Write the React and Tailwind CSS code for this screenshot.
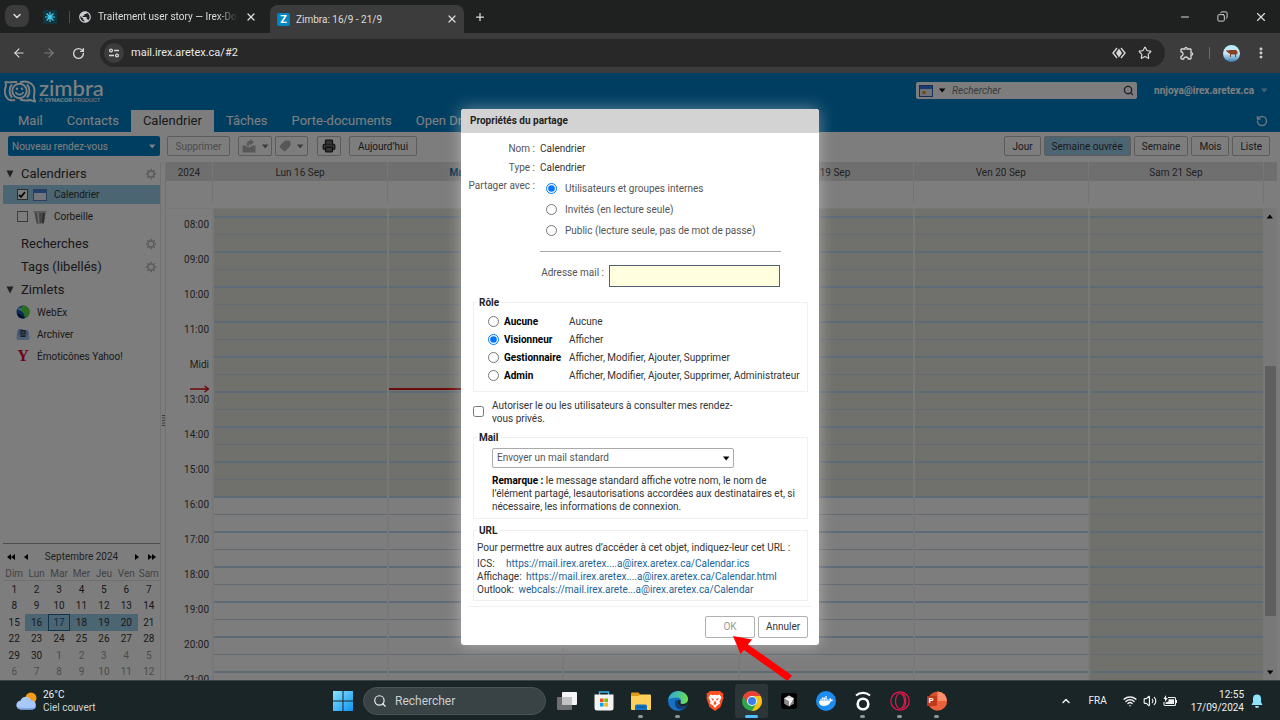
import React, { useState } from 'react';
import { ArrowLeft, ArrowRight, ChevronDown, ChevronUp, Copy, EllipsisVertical, Minus, Plus, Printer, RotateCw, Search, Star, Tag, Volume2, Wifi, X } from 'lucide-react';
import { MdOutlineExtension, MdPublic } from 'react-icons/md';
import { SiDocker } from 'react-icons/si';

const HOURS = ['08:00', '09:00', '10:00', '11:00', 'Midi', '13:00', '14:00', '15:00', '16:00', '17:00', '18:00', '19:00', '20:00', '21:00'];

// closed = number of hour rows that are outside of the working hours
const DAYS = [
  { label: 'Lun 16 Sep', closed: 8 },
  { label: 'Mar 17 Sep', closed: 8, today: true },
  { label: 'Mer 18 Sep', closed: 8 },
  { label: 'Jeu 19 Sep', closed: 8 },
  { label: 'Ven 20 Sep', closed: 8 },
  { label: 'Sam 21 Sep', closed: 14 },
];

const APP_TABS = ['Mail', 'Contacts', 'Calendrier', 'Tâches', 'Porte-documents', 'Open Drive'];
const VIEWS = ['Jour', 'Semaine ouvrée', 'Semaine', 'Mois', 'Liste'];
const WEEKDAYS = ['Dim', 'Lun', 'Mar', 'Mer', 'Jeu', 'Ven', 'Sam'];

const SHARE_WITH = [
  { id: 'internal', label: 'Utilisateurs et groupes internes' },
  { id: 'guests', label: 'Invités (en lecture seule)' },
  { id: 'public', label: 'Public (lecture seule, pas de mot de passe)' },
];

const ROLES = [
  { id: 'none', label: 'Aucune', rights: 'Aucune' },
  { id: 'viewer', label: 'Visionneur', rights: 'Afficher' },
  { id: 'manager', label: 'Gestionnaire', rights: 'Afficher, Modifier, Ajouter, Supprimer' },
  { id: 'admin', label: 'Admin', rights: 'Afficher, Modifier, Ajouter, Supprimer, Administrateur' },
];

/* ---------- Small drawings ---------- */

const Caret = ({ className = '' }) => (
  <svg viewBox="0 0 8 5" className={`w-2 h-[5px] shrink-0 ${className}`} fill="currentColor"><path d="M1 0.5h6.400L4.200 4.500z" /></svg>
);

const GearIcon = () => (
  <svg viewBox="0 0 12 12" className="size-3 text-[#b5b5b5]" fill="none" stroke="currentColor">
    <circle cx="6" cy="6" r="3" strokeWidth="1.300" />
    <path d="M6 0.800v1.700M6 9.500v1.700M0.800 6h1.700M9.500 6h1.700M2.300 2.300l1.200 1.200M8.500 8.500l1.200 1.200M9.700 2.300L8.500 3.500M3.500 8.500L2.300 9.700" strokeWidth="1.600" />
  </svg>
);

const CalendarIcon = () => (
  <svg viewBox="0 0 14 12" className="w-[14px] h-3 shrink-0">
    <rect x="0.5" y="0.5" width="13" height="11" fill="#e4ecf8" stroke="#5b7fbf" />
    <rect x="1" y="1" width="12" height="3" fill="#4a7fd6" />
  </svg>
);

const TrashIcon = () => (
  <svg viewBox="0 0 14 14" className="size-[14px] shrink-0">
    <path d="M1.5 2.5h11L11 13.5H3.5z" fill="#8d8d8d" />
    <path d="M4 3l1 10h1.5L6 3z" fill="#d0d0d0" />
    <path d="M10 3L9 13h1.6L12 3z" fill="#5e5e5e" />
    <rect x="0.5" y="1" width="13" height="2" rx="1" fill="#b5b5b5" />
  </svg>
);

const WebExIcon = () => (
  <svg viewBox="0 0 14 14" className="size-[14px]">
    <circle cx="7" cy="7" r="6.5" fill="#1b55b5" />
    <path d="M7 0.5a6.5 6.5 0 0 1 3 12.2C7 12 9 8 6 7 4 5.500 4 2 7 0.500z" fill="#56d83c" />
    <path d="M1 9c2-1 5 1 8 4-3 1.500-7 0-8-4z" fill="#06245f" />
    <ellipse cx="4" cy="4" rx="2" ry="1.500" fill="#6fd0f5" />
  </svg>
);

const ArchiveIcon = () => (
  <svg viewBox="0 0 14 14" className="size-[14px]">
    <path d="M1.500 4l1.500-2h3l1 1h4l1.500 1.500V9h-11.500z" fill="#7fa8dc" />
    <rect x="4.500" y="3" width="5" height="6.500" fill="#2b3547" />
    <path d="M5.500 4.500h3v1h-3zM5.500 6.500h1v2h-1zM7.500 6.500h1v2h-1z" fill="#a9bfdc" />
    <path d="M0.500 8.500h13l-0.500 4.500H1z" fill="#9cc0ea" />
    <path d="M4.500 8.500h5v1.500h-5z" fill="#2b3547" />
  </svg>
);

const ZimbraMark = () => (
  <svg viewBox="0 0 32 23" className="w-8 h-[23px]" fill="none" stroke="#fff" strokeWidth="1.900">
    <path d="M1.500 1.500c-0.300 2 1 3 0.300 5C0 10.500 0.500 16 4 19c2 1.600 5 1.500 7 1" />
    <path d="M1.500 1.500C4 3.500 7 1.500 13 2" />
    <path d="M16 2.500c8-3 15 2 14.500 9 0 3-1 4.500-0.500 6.500 0.200 1.500 1 2.500 1 3.500-2 0-3-1.500-5-1.500-4 1-7 0.500-10-0.500" />
    <circle cx="15.500" cy="11" r="7.200" />
    <path d="M8 4.500C4.800 8 4.800 14 8 17.500M23 4.500c3.200 3.500 3.200 9.500 0 13" />
    <path d="M11.500 12c1.500 3.500 6.500 3.500 8 0" strokeWidth="1.600" />
    <circle cx="13" cy="8.800" r="1.200" fill="#fff" stroke="none" />
    <circle cx="18" cy="8.800" r="1.200" fill="#fff" stroke="none" />
  </svg>
);

const WindowsIcon = () => (
  <svg viewBox="0 0 20 20" className="size-5">
    <defs>
      <linearGradient id="win" x1="0" y1="0" x2="1" y2="1">
        <stop offset="0" stopColor="#8be3fe" />
        <stop offset="1" stopColor="#0b93f0" />
      </linearGradient>
    </defs>
    <path d="M0 0h9.500v9.500H0zM10.500 0H20v9.500h-9.500zM0 10.500h9.500V20H0zM10.500 10.500H20V20h-9.500z" fill="url(#win)" />
  </svg>
);

const TaskViewIcon = () => (
  <svg viewBox="0 0 20 20" className="size-5">
    <rect x="0" y="6" width="15" height="13" rx="1" fill="#6d6f70" />
    <rect x="5" y="1" width="15" height="13" rx="1" fill="#f4f4f4" />
    <rect x="5" y="6" width="10" height="8" fill="#c2c3c4" />
  </svg>
);

const StoreIcon = () => (
  <svg viewBox="0 0 20 20" className="size-5">
    <path d="M5.500 5V1h9v4" fill="none" stroke="#35b5ea" strokeWidth="1.400" />
    <path d="M0.500 3.500h19V17a2.500 2.500 0 0 1-2.500 2.500H3A2.500 2.500 0 0 1 0.500 17z" fill="#f3f3f3" />
    <path d="M6 7.500h3.600v3.600H6z" fill="#f25022" />
    <path d="M10.400 7.500H14v3.600h-3.600z" fill="#7fba00" />
    <path d="M6 11.900h3.600v3.600H6z" fill="#00a4ef" />
    <path d="M10.400 11.900H14v3.600h-3.600z" fill="#ffb900" />
  </svg>
);

const FolderIcon = () => (
  <svg viewBox="0 0 20 20" className="size-5">
    <path d="M0 2.500a1 1 0 0 1 1-1h6.500l2 2.500H19v4H0z" fill="#e09b17" />
    <path d="M0 5h7.500l2-1.500H19a1 1 0 0 1 1 1V18a1 1 0 0 1-1 1H1a1 1 0 0 1-1-1z" fill="#fdd05b" />
    <path d="M4 19v-4a1.500 1.500 0 0 1 1.500-1.500h9A1.500 1.500 0 0 1 16 15v4z" fill="#1073c6" />
    <rect x="6" y="15.500" width="8" height="1" fill="#0a4c8a" />
  </svg>
);

const EdgeIcon = () => (
  <svg viewBox="0 0 20 20" className="size-5">
    <defs>
      <linearGradient id="edgeTop" x1="0" y1="0.300" x2="1" y2="0.500">
        <stop offset="0" stopColor="#2aa5e0" />
        <stop offset="1" stopColor="#6ce04f" />
      </linearGradient>
    </defs>
    <circle cx="10" cy="10" r="10" fill="#1670c4" />
    <path d="M0.200 9C1 3.500 5 0 10 0c6 0 10 4 10 8 0 3.500-2.500 5-5 5-2 0-3.300-0.800-2.500-1.800C14 9 12 6.500 9 6.500 5 6.500 1.500 7.500 0.200 9z" fill="url(#edgeTop)" />
    <path d="M7.500 9.500c-2 4 0.500 9 5.500 9 2.500-0.500 4.500-2 5.800-4-2.500 1.300-6 1-7.800-0.800C9.500 12.500 9.500 10.500 10.500 9z" fill="#123f7c" />
    <path d="M18.800 14.500c-2.500 1.300-6 1-7.800-0.800-1.500-1.200-1.500-3.200-0.500-4.700 1.500-0.500 2.700 1 2 2.200-0.800 1 0.500 1.800 2.500 1.800 2 0 4-1 5-3 0 1.500-0.300 3-1.200 4.500z" fill="#1b2628" />
  </svg>
);

const BraveIcon = () => (
  <svg viewBox="0 0 20 20" className="size-5">
    <path d="M5 0h10l1.500 1.500L18.500 2.500 18 5.500l0.700 1L15.500 16l-5.500 4-5.500-4L1.300 6.500l0.700-1L1.500 2.500 3.500 1.500z" fill="#fb4f23" />
    <path d="M5.500 3.500l2.500 0.800 2-0.500 2 0.500 2.500-0.800 2 3-2 4 0.500 2-3 2L10 17l-2-2.500-3-2 0.500-2-2-4z" fill="#fff" />
    <path d="M6 7l3 1-1 2zM14 7l-3 1 1 2zM8.500 13l1-3h1l1 3-1.500 1z" fill="#fb4f23" />
  </svg>
);

const ChromeIcon = () => (
  <svg viewBox="0 0 20 20" className="size-5">
    <circle cx="10" cy="10" r="10" fill="#2aa84a" />
    <path d="M1.340 5A10 10 0 0 1 18.660 5H10a5 5 0 0 0-4.330 7.500z" fill="#ea4335" />
    <path d="M18.660 5A10 10 0 0 1 10 20l4.330-7.500A5 5 0 0 0 10 5z" fill="#fbc116" />
    <circle cx="10" cy="10" r="5" fill="#fff" />
    <circle cx="10" cy="10" r="4" fill="#3b7ded" />
  </svg>
);

const CubeIcon = () => (
  <svg viewBox="0 0 20 20" className="size-5">
    <rect x="2" y="2" width="16" height="16" rx="3" fill="#000" />
    <path d="M10 4.500l4.800 2.700v5.600L10 15.500l-4.800-2.700V7.200z" fill="#8c8c8c" />
    <path d="M10 4.500l4.800 2.700L10 10 5.200 7.200z" fill="#d5d5d5" />
    <path d="M5.200 7.200h9.600L10 15.500V10z" fill="#f5f5f5" />
  </svg>
);

const DockerIcon = () => (
  <span className="size-5 rounded-full bg-[#1d8cf0] flex items-center justify-center text-white"><SiDocker className="size-[14px]" /></span>
);

const RingIcon = () => (
  <svg viewBox="0 0 20 20" className="size-5" fill="none" stroke="#fff">
    <circle cx="10" cy="13" r="5.300" strokeWidth="2.600" />
    <path d="M3 4.500C7 1 13 1 17 4.500" strokeWidth="2.200" />
  </svg>
);

const OperaIcon = () => (
  <svg viewBox="0 0 20 20" className="size-5" fill="none" stroke="#e0194f" strokeWidth="1.200">
    <circle cx="10" cy="10" r="9.200" />
    <ellipse cx="10" cy="10" rx="4.500" ry="7.500" />
    <path d="M12 2.500c5 2 5 13 0 15" />
  </svg>
);

const PowerPointIcon = () => (
  <span className="relative size-5">
    <svg viewBox="0 0 20 20" className="size-5">
      <circle cx="10.500" cy="10" r="9.500" fill="#d35230" />
      <path d="M10.500 0.500A9.500 9.500 0 0 1 20 10h-9.500z" fill="#ff8f6b" />
      <path d="M1 10h19a9.500 9.500 0 0 1-19 0z" fill="#e9623c" />
      <rect x="0" y="5" width="10" height="10" rx="1" fill="#c0391d" />
    </svg>
    <span className="absolute left-[2px] top-[5px] text-[8px] leading-[10px] font-bold text-white">P</span>
  </span>
);

const WeatherIcon = () => (
  <svg viewBox="0 0 22 18" className="w-[22px] h-[18px]">
    <circle cx="15" cy="6" r="5.500" fill="#f59b14" />
    <path d="M5 17.500a4.500 4.500 0 0 1-0.300-9A5.500 5.500 0 0 1 15 8.300a4.700 4.700 0 0 1 1.500 9.200z" fill="#a9c8fa" />
    <path d="M2 15c5 1.500 13 1.500 18 0-0.700 1.600-2 2.500-3.500 2.500H5A3.800 3.800 0 0 1 2 15z" fill="#7ea7ef" />
  </svg>
);

const BatteryIcon = () => (
  <svg viewBox="0 0 14 12" className="w-[14px] h-3">
    <path d="M5 2.500h6.500a1 1 0 0 1 1 1v6a1 1 0 0 1-1 1H2a1 1 0 0 1-1-1V7" fill="none" stroke="#f0f0f0" strokeWidth="1.100" />
    <path d="M5.500 4.200H11V9H2.600V7.500l2.900-1zM13 5h1v3h-1zM3 0L0.500 4H2v3l2.800-4H3.200z" fill="#f0f0f0" />
  </svg>
);

const PINNED = [
  { name: 'Affichage des tâches', Icon: TaskViewIcon },
  { name: 'Microsoft Store', Icon: StoreIcon },
  { name: 'Explorateur', Icon: FolderIcon, running: true },
  { name: 'Edge', Icon: EdgeIcon, running: true },
  { name: 'Brave', Icon: BraveIcon },
  { name: 'Chrome', Icon: ChromeIcon, active: true },
  { name: 'Cursor', Icon: CubeIcon },
  { name: 'Docker', Icon: DockerIcon },
  { name: 'Okta', Icon: RingIcon, running: true },
  { name: 'Opera', Icon: OperaIcon, running: true },
  { name: 'PowerPoint', Icon: PowerPointIcon, running: true },
];

/* ---------- Browser window ---------- */

const TabStrip = () => (
  <div className="h-[33px] bg-[#1f2120] flex items-end text-[#dcdcdc] text-[10px] shrink-0">
    <button aria-label="Rechercher dans les onglets" className="ml-[5px] mb-[6px] w-6 h-[22px] rounded-lg bg-[#3c3c3c] flex items-center justify-center">
      <ChevronDown className="size-3" strokeWidth={3} />
    </button>
    <div className="h-[33px] flex items-center">
      <span className="ml-[14px] size-[14px] bg-[#12343c] flex items-center justify-center">
        <svg viewBox="0 0 12 12" className="size-3" stroke="#3fd0f5" strokeWidth="1.200"><path d="M6 1v10M1 6h10M2.500 2.500l7 7M9.500 2.500l-7 7" /></svg>
      </span>
      <span className="ml-3 w-px h-3 bg-[#4b4b4b]" />
      <MdPublic className="ml-[8px] size-[14px] text-[#c9ccd0]" />
      <span className="ml-[6px] w-[140px] overflow-hidden whitespace-nowrap [mask-image:linear-gradient(to_right,black_85%,transparent)]">Traitement user story — Irex-Doc</span>
      <X className="ml-[7px] size-3" strokeWidth={2.5} />
    </div>
    <div className="ml-[13px] w-[194px] h-7 rounded-t-lg bg-[#3c3c3c] flex items-center px-[7px]">
      <span className="size-[13px] rounded-[2px] bg-[#0087c3] text-white text-[11px] leading-[13px] font-bold text-center">Z</span>
      <span className="ml-[6px] flex-1">Zimbra: 16/9 - 21/9</span>
      <X className="-mr-px mb-px size-3" strokeWidth={2.5} />
    </div>
    <button aria-label="Nouvel onglet" className="ml-[10px] mb-[10px]"><Plus className="size-3" strokeWidth={2.5} /></button>
    <div className="ml-auto h-[33px] flex items-center gap-[26px] pr-[12px]">
      <button aria-label="Réduire"><Minus className="size-3" /></button>
      <button aria-label="Restaurer"><Copy className="size-[11px] -scale-x-100" /></button>
      <button aria-label="Fermer"><X className="size-[14px]" /></button>
    </div>
  </div>
);

const AddressBar = () => (
  <div className="h-10 bg-[#3c3c3c] flex items-center text-[#d5d7d9] shrink-0 px-3">
    <button aria-label="Retour"><ArrowLeft className="size-[14px]" /></button>
    <button aria-label="Suivant" className="ml-4 text-[#7d7d7d]"><ArrowRight className="size-[14px]" /></button>
    <button aria-label="Actualiser" className="ml-4"><RotateCw className="size-[13px]" strokeWidth={2.5} /></button>
    <div className="ml-[15px] flex-1 h-7 rounded-full bg-[#282828] flex items-center pl-1 pr-[13px]">
      <span className="size-5 rounded-full bg-[#3c3c3c] flex items-center justify-center">
        <svg viewBox="0 0 12 12" className="size-3" fill="none" stroke="currentColor" strokeWidth="1.300"><circle cx="3" cy="3.500" r="1.400" /><path d="M6 3.500h5M1 8.500h5" /><circle cx="9" cy="8.500" r="1.400" /></svg>
      </span>
      <input aria-label="Adresse" defaultValue="mail.irex.aretex.ca/#2" className="ml-[7px] flex-1 bg-transparent text-[11px] text-[#e8e8e8] outline-none" />
      <svg viewBox="0 0 14 12" className="w-[14px] h-3" fill="none" stroke="currentColor" strokeWidth="1.400"><path d="M5 1L1 6l4 5M9 1l4 5-4 5" /><path d="M7 1.500L10 6l-3 4.500L4 6z" fill="currentColor" stroke="none" /></svg>
      <Star className="ml-3 size-[14px]" />
    </div>
    <MdOutlineExtension className="ml-[14px] size-4" />
    <span className="ml-[14px] w-px h-3 bg-[#6a6a6a]" />
    <span className="ml-[13px] size-[17px] rounded-full bg-linear-to-b from-[#b9eafa] via-[#c9e6f2] to-[#2f7fb5] flex items-center justify-center">
      <svg viewBox="0 0 12 8" className="w-3 h-2" fill="#8a3f22"><path d="M0 1l2 0.500L4 1h6l1.500 1.500V5L10 5.500V8H9V5.500H5V8H4V5L1 3z" /></svg>
    </span>
    <button aria-label="Menu" className="ml-[14px]"><EllipsisVertical className="size-[14px]" strokeWidth={3} /></button>
  </div>
);

/* ---------- Webmail ---------- */

const MailHeader = () => (
  <header className="h-[59px] bg-[#007cc3] text-white shrink-0 flex justify-between">
    <div className="flex flex-col justify-between">
      <div className="flex items-center pl-1 pt-[6px] gap-[3px]">
        <ZimbraMark />
        <div>
          <div className="font-['Lato',sans-serif] font-medium text-[22px] leading-[18px]">zimbra</div>
          <div className="text-[6px] leading-[6px]">A <b>SYNACOR</b> PRODUCT</div>
        </div>
      </div>
      <nav className="flex text-[13px] leading-[22px] pl-[6px]">
        {APP_TABS.map((tab) => (
          <a
            key={tab}
            href="#"
            className={`px-3 whitespace-nowrap ${tab === 'Calendrier' ? 'bg-[#fafafa] text-[#333]' : ''}`}
          >
            {tab}
          </a>
        ))}
      </nav>
    </div>
    <div className="flex flex-col items-end pt-[9px] pr-3">
      <div className="flex items-center">
        <div className="w-[221px] h-[17px] rounded-[2px] bg-[#fafafa] flex items-center px-[3px] text-black">
          <svg viewBox="0 0 14 12" className="w-[14px] h-3"><rect x="0.500" y="0.500" width="13" height="11" fill="#dfe6f2" stroke="#2f5fb0" /><rect x="1" y="1" width="12" height="3" fill="#2f77e0" /><circle cx="5" cy="7.500" r="1.800" fill="#e0901c" /></svg>
          <Caret className="ml-[5px]" />
          <input aria-label="Rechercher" placeholder="Rechercher" className="ml-[6px] flex-1 min-w-0 bg-transparent text-[10px] italic placeholder:text-[#777] outline-none" />
          <Search className="size-[11px]" strokeWidth={3} color="#3c4450" />
        </div>
        <button className="ml-[17px] flex items-center gap-[6px] text-[10px] font-bold">
          nnjoya@irex.aretex.ca <Caret className="text-[#8fc4e6]" />
        </button>
      </div>
      <button aria-label="Actualiser la page" className="mt-[16px]"><RotateCw className="size-3 -scale-x-100 text-[#d0e6f4]" strokeWidth={3} /></button>
    </div>
  </header>
);

const ToolButton = ({ children, className = '', ...props }) => (
  <button className={`h-5 rounded-[2px] border border-[#b8b8b8] px-[7px] flex items-center justify-center gap-[5px] whitespace-nowrap ${className}`} {...props}>
    {children}
  </button>
);

const Toolbar = () => (
  <div className="h-[30px] flex items-center pl-2 pr-[10px] pb-[2px] shrink-0 text-[10px] text-[#333]">
    <button className="w-[152px] h-5 rounded-[2px] bg-[#007cc3] text-white px-1 flex items-center justify-between">
      Nouveau rendez-vous <Caret />
    </button>
    <ToolButton className="ml-[7px] text-[#999] w-[63px]" disabled>Supprimer</ToolButton>
    <ToolButton className="ml-2 text-[#777] w-[34px]" aria-label="Déplacer" disabled>
      <svg viewBox="0 0 14 14" className="size-[14px] shrink-0" fill="#b0b0b0"><path d="M0.500 6.500H4l1 1.500h4l1-1.500h3.500v7h-13zM5 7V4.500C5 2.500 6.500 2 8 2V0l4 3.300-4 3.200v-2c-0.800 0-1 0.200-1 1V7z" /></svg>
      <Caret />
    </ToolButton>
    <ToolButton className="ml-[3px] text-[#777] w-[33px]" aria-label="Tag" disabled>
      <Tag className="size-3 shrink-0 rotate-90" fill="#b0b0b0" color="#b0b0b0" /> <Caret />
    </ToolButton>
    <ToolButton className="ml-[9px] w-6" aria-label="Imprimer"><Printer className="size-[14px] shrink-0" fill="#666" color="#222" /></ToolButton>
    <ToolButton className="ml-2 w-[68px]">Aujourd’hui</ToolButton>
    <div className="ml-auto flex gap-[3px]">
      {VIEWS.map((view) => (
        <ToolButton key={view} className={view === 'Semaine ouvrée' ? 'bg-[#97cbe6]' : ''}>{view}</ToolButton>
      ))}
    </div>
  </div>
);

const SectionTitle = ({ children, open, gear }) => (
  <div className="h-[23px] flex items-center pl-[6px] pr-[3px] text-[13px]">
    <span className="w-[15px]">
      {open && <svg viewBox="0 0 8 8" className="size-2" fill="#444"><path d="M0.500 0.500h7L4 7.500z" /></svg>}
    </span>
    <span className="flex-1">{children}</span>
    {gear && <GearIcon />}
  </div>
);

const MiniCalendar = () => {
  // September 2024 starts on a Sunday
  const cells = Array.from({ length: 42 }, (_, i) => ({ n: i < 30 ? i + 1 : i - 29, other: i >= 30 }));

  return (
    <div className="ml-[3px] border-t border-[#999] text-center text-[10px]">
      <div className="h-[25px] flex items-center px-1 text-black">
        <button aria-label="Année précédente"><svg viewBox="0 0 8 6" className="w-2 h-[6px]"><path d="M4 0v6L0 3zM8 0v6L4 3z" /></svg></button>
        <button aria-label="Mois précédent" className="ml-[9px]"><svg viewBox="0 0 4 6" className="w-1 h-[6px]"><path d="M4 0v6L0 3z" /></svg></button>
        <span className="flex-1 text-[#444]">Septembre 2024</span>
        <button aria-label="Mois suivant" className="mr-[9px]"><svg viewBox="0 0 4 6" className="w-1 h-[6px]"><path d="M0 0v6l4-3z" /></svg></button>
        <button aria-label="Année suivante"><svg viewBox="0 0 8 6" className="w-2 h-[6px]"><path d="M0 0v6l4-3zM4 0v6l4-3z" /></svg></button>
      </div>
      <div className="grid grid-cols-7 h-3 leading-[10px] border-b border-[#e0e0e0] text-[#888]">
        {WEEKDAYS.map((d) => <span key={d}>{d}</span>)}
      </div>
      <div className="grid grid-cols-7 grid-rows-6 h-[99px] text-[#333]">
        {cells.map(({ n, other }, i) => (
          <button
            key={i}
            className={`${other ? 'text-[#999]' : ''} ${i >= 15 && i <= 19 ? 'bg-[#97cbe6]' : ''} ${i === 16 ? 'border border-[#1d6a96] text-[#0a5f94]' : ''}`}
          >
            {n}
          </button>
        ))}
      </div>
    </div>
  );
};

const Sidebar = () => (
  <aside className="w-40 shrink-0 flex flex-col text-[#333]">
    <SectionTitle open gear>Calendriers</SectionTitle>
    <label className="ml-[3px] h-[19px] bg-[#97cbe6] flex items-center pl-[14px] text-[10px]">
      <input type="checkbox" defaultChecked className="peer appearance-none size-[11px] border border-[#555] bg-white" />
      <svg viewBox="0 0 8 8" className="-ml-[10px] mr-px size-2" fill="none" stroke="#000" strokeWidth="1.800"><path d="M1 4l2 2 4-5" /></svg>
      <span className="ml-[6px]"><CalendarIcon /></span>
      <span className="ml-[7px]">Calendrier</span>
    </label>
    <label className="ml-[3px] mt-[2px] h-[21px] flex items-center pl-[14px] text-[10px]">
      <input type="checkbox" className="appearance-none size-[11px] border border-[#777] bg-[#fafafa]" />
      <span className="ml-[5px]"><TrashIcon /></span>
      <span className="ml-[7px]">Corbeille</span>
    </label>
    <div className="h-[5px]" />
    <SectionTitle gear>Recherches</SectionTitle>
    <SectionTitle gear>Tags (libellés)</SectionTitle>
    <SectionTitle open>Zimlets</SectionTitle>
    <div className="text-[10px] pl-4">
      <a href="#" className="h-[22px] flex items-center gap-[7px]"><WebExIcon />WebEx</a>
      <a href="#" className="h-[22px] flex items-center gap-[7px]"><ArchiveIcon />Archiver</a>
      <a href="#" className="h-[22px] flex items-center gap-[7px]">
        <span className="w-[14px] text-center font-['Liberation_Serif',serif] font-bold text-base leading-[14px] text-[#d80a34]">Y</span>Émoticônes Yahoo!
      </a>
    </div>
    <div className="flex-1" />
    <MiniCalendar />
  </aside>
);

const WeekGrid = () => (
  <div className="flex-1 min-w-0 mr-[3px] border-l border-[#e4e4e4] flex flex-col text-[10px] text-[#444]">
    <div className="h-[19px] bg-[#dedede] flex leading-[21px] text-center shrink-0">
      <div className="w-[46px]">2024</div>
      <div className="flex-1 grid grid-cols-6">
        {DAYS.map((day) => (
          <div key={day.label} className={`border-l border-[#efefef] ${day.today ? 'font-bold text-[#005f99]' : ''}`}>{day.label}</div>
        ))}
      </div>
      <div className="w-[14px] border-l border-[#efefef]" />
    </div>
    <div className="h-[22px] flex shrink-0">
      <div className="w-[46px]" />
      <div className="flex-1 grid grid-cols-6">
        {DAYS.map((day) => <div key={day.label} className="border-l border-[#e6e6e6]" />)}
      </div>
      <div className="w-[14px] border-l border-[#e6e6e6]" />
    </div>
    <div className="h-[6px] border-b border-[#eee] shrink-0" />
    <div className="relative flex-1 min-h-0 overflow-hidden flex">
      <div className="w-[46px] shrink-0 pt-2 pr-[3px] text-right">
        {HOURS.map((h) => <div key={h} className="h-[35px] leading-[15px]">{h}</div>)}
      </div>
      <svg viewBox="0 0 20 8" className="absolute left-6 top-[176px] w-5 h-2" fill="none" stroke="#d81414" strokeWidth="1.400"><path d="M0 4h18M14.500 1L18.500 4l-4 3" /></svg>
      <div className="flex-1 grid grid-cols-6">
        {DAYS.map((day) => (
          <div key={day.label} className="relative border-l-2 border-[#f0f0f0]">
            <div className="h-[7px] bg-[#e1e2d8]" />
            {HOURS.map((h, i) => (
              <div key={h} className={`h-[35px] border-t-2 border-[#bcd4ec] ${i < day.closed ? 'bg-[#e1e2d8]' : ''}`}>
                <div className="h-[17px] border-b border-[#c6d5e4]" />
              </div>
            ))}
            {day.today && <div className="absolute inset-x-0 top-[179px] h-[2px] bg-[#d81414]" />}
          </div>
        ))}
      </div>
      <div className="w-[14px] shrink-0 bg-[#f0f0f0] flex flex-col items-center py-[5px]">
        <Caret className="rotate-180 text-black" />
        <div className="mt-[147px] w-[11px] h-[250px] bg-[#bfbfbf]" />
        <Caret className="mt-auto text-black" />
      </div>
    </div>
  </div>
);

/* ---------- Share dialog ---------- */

const UrlLine = ({ label, url, wide }) => (
  <p className="whitespace-nowrap">
    {label} <a href="#" className={`text-[#1c6296] ${wide ? 'ml-[9px]' : 'ml-[2px]'}`}>{url}</a>
  </p>
);

const ShareDialog = () => {
  const [shareWith, setShareWith] = useState('internal');
  const [role, setRole] = useState('viewer');
  const [email, setEmail] = useState('');

  return (
    <form
      role="dialog"
      aria-labelledby="share-title"
      onSubmit={(e) => e.preventDefault()}
      className="w-[358px] rounded-[3px] bg-white shadow-[0_0_16px_rgba(255,255,255,0.4)] text-[10px] leading-[13px] text-[#333]"
    >
      <h2 id="share-title" className="h-6 rounded-t-[3px] bg-[#d3d3d3] px-[9px] leading-6 font-bold text-[#222]">Propriétés du partage</h2>

      <div className="px-3">
        <dl className="pt-[6px] grid grid-cols-[62px_1fr] gap-x-[5px] leading-[19px]">
          <dt className="text-right whitespace-nowrap text-[#555]">Nom :</dt>
          <dd>Calendrier</dd>
          <dt className="text-right whitespace-nowrap text-[#555]">Type :</dt>
          <dd>Calendrier</dd>
        </dl>
        <div className="grid grid-cols-[62px_1fr] gap-x-[5px]">
          <span id="share-with" className="leading-[17px] flex justify-end whitespace-nowrap text-[#555]">Partager avec :</span>
          <div role="radiogroup" aria-labelledby="share-with" className="pl-[6px] pt-px text-[#555]">
            {SHARE_WITH.map((option) => (
              <label key={option.id} className="h-[21px] flex items-center gap-2">
                <input
                  type="radio" name="shareWith"
                  checked={shareWith === option.id}
                  onChange={() => setShareWith(option.id)}
                  className="size-[11px]"
                />
                {option.label}
              </label>
            ))}
          </div>
        </div>

        <hr className="mt-[10px] ml-[67px] mr-[26px] border-[#a8a8a8]" />

        <div className="mt-[13px] flex">
          <label htmlFor="share-mail" className="flex-1 pr-[5px] text-right leading-[15px] text-[#555]">Adresse mail :</label>
          <input
            id="share-mail" type="text"
            value={email}
            onChange={(e) => setEmail(e.target.value)}
            className="mr-[27px] w-[171px] h-[22px] px-1 border border-[#4f6472] bg-[#ffffe0] outline-none"
          />
        </div>

        <fieldset className="mt-[9px] h-[96px] min-w-0 -mr-px border border-[#f0f0f0] pl-[14px]">
          <legend className="-ml-[11px] px-[2px] font-bold text-[#222]">Rôle</legend>
          <div className="pt-1">
            {ROLES.map((r) => (
              <label key={r.id} className="h-[18px] flex items-center whitespace-nowrap">
                <input
                  type="radio" name="role"
                  checked={role === r.id}
                  onChange={() => setRole(r.id)}
                  className="size-[11px]"
                />
                <span className="ml-[5px] w-[65px] font-bold text-black">{r.label}</span>
                {r.rights}
              </label>
            ))}
          </div>
        </fieldset>

        <label className="mt-[7px] flex items-center">
          <input type="checkbox" className="size-[11px] shrink-0" />
          <span className="ml-2 w-[250px]">Autoriser le ou les utilisateurs à consulter mes rendez-<br />vous privés.</span>
        </label>

        <fieldset className="mt-[6px] h-[88px] min-w-0 -mr-px border border-[#f0f0f0] pl-[18px]">
          <legend className="-ml-[15px] px-[2px] font-bold text-[#222]">Mail</legend>
          <div className="relative mt-[4px] w-[242px]">
            <select aria-label="Message" className="w-full h-5 appearance-none rounded-[2px] border border-[#aaa] bg-white pl-1 text-[#555]">
              <option>Envoyer un mail standard</option>
            </select>
            <Caret className="absolute right-1 top-2 text-black pointer-events-none" />
          </div>
          <p className="mt-[6px] pr-2">
            <strong className="text-black">Remarque :</strong> le message standard affiche votre nom, le nom de l’élément partagé, lesautorisations accordées aux destinataires et, si nécessaire, les informations de connexion.
          </p>
        </fieldset>

        <fieldset className="mt-[5px] h-[77px] min-w-0 -mr-px border border-[#f0f0f0] pl-[3px]">
          <legend className="px-[2px] font-bold text-[#222]">URL</legend>
          <p className="mt-[4px] mb-[3px] whitespace-nowrap">Pour permettre aux autres d’accéder à cet objet, indiquez-leur cet URL :</p>
          <UrlLine label="ICS:" url="https://mail.irex.aretex....a@irex.aretex.ca/Calendar.ics" wide />
          <UrlLine label="Affichage:" url="https://mail.irex.aretex....a@irex.aretex.ca/Calendar.html" />
          <UrlLine label="Outlook:" url="webcals://mail.irex.arete...a@irex.aretex.ca/Calendar" />
        </fieldset>
      </div>

      <div className="mt-[5px] mx-[7px] border-t border-[#f0f0f0] pt-[9px] pb-[7px] pr-1 flex justify-end gap-[3px]">
        <div className="relative">
          <button type="submit" disabled={!email} className="w-[50px] h-[22px] rounded-[2px] border border-[#b0b0b0] text-[#999]">OK</button>
          <svg viewBox="0 0 60 46" className="absolute left-7 top-5 w-[60px] h-[46px] z-10 pointer-events-none" fill="#ff0000">
            <path d="M0 0l19 3.500-4 5 44 31-4.500 5.500-43.500-31-3.500 4z" />
          </svg>
        </div>
        <button type="button" className="w-[50px] h-[22px] rounded-[2px] border border-[#b0b0b0]">Annuler</button>
      </div>
    </form>
  );
};

/* ---------- Taskbar ---------- */

const Taskbar = () => (
  <footer className="h-10 shrink-0 bg-[#1a2527] border-t border-[#3a4244] grid grid-cols-[1fr_auto_1fr] items-center text-[#f0f0f0] text-[10px] leading-[13px]">
    <div className="flex items-center gap-[5px] pl-4">
      <WeatherIcon />
      <div><p>26°C</p><p className="text-[#d0d4d5]">Ciel couvert</p></div>
    </div>
    <div className="flex items-center pl-[6px]">
      <button aria-label="Démarrer"><WindowsIcon /></button>
      <label className="ml-[10px] mr-1 w-[183px] h-7 rounded-full border border-[#4a5456] bg-[#394345] flex items-center gap-2 px-[9px]">
        <Search className="size-[14px] shrink-0" />
        <input aria-label="Rechercher" placeholder="Rechercher" className="w-full bg-transparent text-xs placeholder:text-[#c9cdce] outline-none" />
      </label>
      {PINNED.map(({ name, Icon, running, active }) => (
        <button key={name} aria-label={name} className={`relative w-[33px] mr-1 last:mr-0 h-[34px] rounded-[3px] flex items-center justify-center ${active ? 'bg-[#2c3638]' : ''}`}>
          <Icon />
          {running && <span className="absolute bottom-0 w-[5px] h-[3px] rounded-full bg-[#8f9697]" />}
          {active && <span className="absolute bottom-0 w-[13px] h-[3px] rounded-full bg-[#4cc2ff]" />}
        </button>
      ))}
    </div>
    <div className="flex items-center justify-end pr-[17px]">
      <ChevronUp className="size-3" strokeWidth={3} />
      <span className="ml-[17px]">FRA</span>
      <Wifi className="ml-[16px] size-[14px]" strokeWidth={2.5} />
      <Volume2 className="ml-[6px] size-[14px]" />
      <span className="ml-[6px]"><BatteryIcon /></span>
      <div className="ml-[14px] text-right"><p>12:55</p><p>17/09/2024</p></div>
      <svg viewBox="0 0 12 14" className="ml-[7px] w-3 h-[14px]" fill="#8fe3fb"><path d="M6 0.500a4 4 0 0 1 4 4V8l1.500 3h-11L2 8V4.500a4 4 0 0 1 4-4zM4 12h4a2 2 0 0 1-4 0z" /></svg>
    </div>
  </footer>
);

const App = () => {
  return (
    <div className="h-screen flex flex-col overflow-hidden font-['Roboto','Open_Sans',sans-serif]">
      <TabStrip />
      <AddressBar />
      <main className="relative flex-1 min-h-0 flex flex-col bg-[#fafafa]">
        <MailHeader />
        <Toolbar />
        <div className="flex-1 min-h-0 flex">
          <Sidebar />
          <div className="w-[5px] shrink-0 border-l border-[#e4e4e4] flex items-center justify-center text-[#777]">
            <svg viewBox="0 0 3 12" className="w-[3px] h-3" fill="currentColor"><path d="M0 0h3v1H0zM0 2.500h3v1H0zM0 5h3v1H0zM0 7.500h3v1H0zM0 10h3v1H0z" /></svg>
          </div>
          <WeekGrid />
        </div>
        {/* Dimmed layer with the dialog in the middle */}
        <div className="absolute inset-0 z-10 bg-black/50 flex items-center justify-center">
          <ShareDialog />
        </div>
      </main>
      <Taskbar />
    </div>
  );
};

export default App;
